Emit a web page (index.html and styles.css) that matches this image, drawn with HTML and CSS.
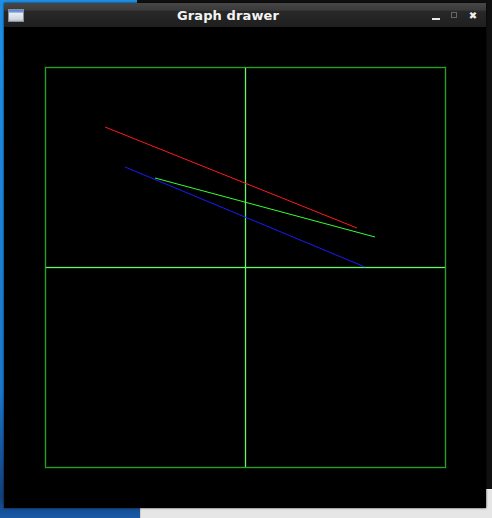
FILE: index.html
```html
<!DOCTYPE html>
<html lang="en">
<head>
    <meta charset="UTF-8">
    <title>Graph drawer</title>
    <link rel="stylesheet" href="styles.css">
</head>
<body>
    <div class="desktop">
        <div class="bg-terminal"></div>
        <div class="bg-panel"></div>

        <section class="window">
            <header class="titlebar">
                <span class="app-icon"></span>
                <h1 class="title">Graph drawer</h1>
                <div class="win-buttons">
                    <span class="wbtn wbtn-min"></span>
                    <span class="wbtn wbtn-max"></span>
                    <span class="wbtn wbtn-close">&#x2716;</span>
                </div>
            </header>

            <main class="canvas">
                <div class="plot">
                    <!-- viewBox in window coords so points match the screenshot -->
                    <svg class="graphs" width="399" height="399" viewBox="46 68 399 399">
                        <line x1="46" y1="267.5" x2="445" y2="267.5" class="axis-glow"/>
                        <line x1="245.5" y1="68" x2="245.5" y2="467" class="axis-glow"/>
                        <line x1="46" y1="267.5" x2="445" y2="267.5" class="axis"/>
                        <line x1="245.5" y1="68" x2="245.5" y2="467" class="axis"/>
                        <line x1="105" y1="127" x2="357" y2="228" stroke="#ff1a1a"/>
                        <line x1="155" y1="178" x2="375" y2="237" stroke="#33ff33"/>
                        <line x1="125" y1="167" x2="365" y2="267" stroke="#1a1aff"/>
                    </svg>
                </div>
            </main>
        </section>
    </div>
</body>
</html>
```

FILE: styles.css
```css
* {
    box-sizing: border-box;
    margin: 0;
    padding: 0;
}

body {
    font-family: "DejaVu Sans", sans-serif;
    background-color: #000;
    overflow: hidden;
}

.desktop {
    position: relative;
    width: 492px;
    height: 518px;
    background: linear-gradient(180deg, #1e8fe6 0%, #1a78cc 75%, #123f7a 96%, #1a5aa8 100%);
}

.bg-terminal {
    position: absolute;
    left: 137px;
    top: 0;
    width: 355px;
    height: 489px;
    background-color: #101010;
}

.bg-panel {
    position: absolute;
    left: 140px;
    top: 489px;
    width: 352px;
    height: 29px;
    background-color: #e6e6e6;
    border-top: 1px solid #f4f4f4;
    border-left: 1px solid #cfcfcf;
}

.window {
    position: absolute;
    left: 4px;
    top: 3px;
    width: 482px;
    height: 505px;
    display: flex;
    flex-direction: column;
    background-color: #000;
    box-shadow: 0 0 2px rgba(0, 0, 0, 0.8);
}

.titlebar {
    height: 24px;
    display: flex;
    align-items: center;
    background: linear-gradient(180deg, #474747 0%, #3a3a3a 30%, #282828 34%, #1f1f1f 100%);
    padding: 0 4px;
}

.app-icon {
    width: 16px;
    height: 13px;
    background: linear-gradient(180deg, #5a86d8 0%, #6f97dd 18%, #e8ecf4 30%, #d2d7e0 80%, #b8bcc6 100%);
    border: 1px solid #8a8f99;
}

.title {
    flex: 1;
    text-align: center;
    color: #f4f4f4;
    font-size: 13px;
    font-weight: bold;
    letter-spacing: 0.1px;
}

.win-buttons {
    display: flex;
    align-items: center;
    gap: 11px;
    margin-right: 4px;
}

.wbtn {
    width: 8px;
    height: 8px;
    display: flex;
    align-items: center;
    justify-content: center;
}

.wbtn-min {
    border-bottom: 2px solid #e8e8e8;
    height: 6px;
    margin-top: 4px;
}

.wbtn-max {
    width: 6px;
    height: 6px;
    border: 1px solid #666;
}

.wbtn-close {
    color: #f0f0f0;
    font-size: 10px;
    width: 10px;
}

.canvas {
    flex: 1;
    background-color: #000;
    padding: 40px 0 0 41px;
}

.plot {
    width: 401px;
    height: 401px;
    border: 1px solid #28a028;
    box-shadow: 0 0 0 1px rgba(20, 110, 20, 0.25), inset 0 0 0 1px rgba(20, 110, 20, 0.25);
    line-height: 0;
}

.graphs line {
    stroke-width: 1;
}

.graphs .axis-glow {
    stroke: rgba(40, 160, 40, 0.25);
    stroke-width: 3;
}

.graphs .axis {
    stroke: #70f070;
    shape-rendering: crispEdges;
}
```
